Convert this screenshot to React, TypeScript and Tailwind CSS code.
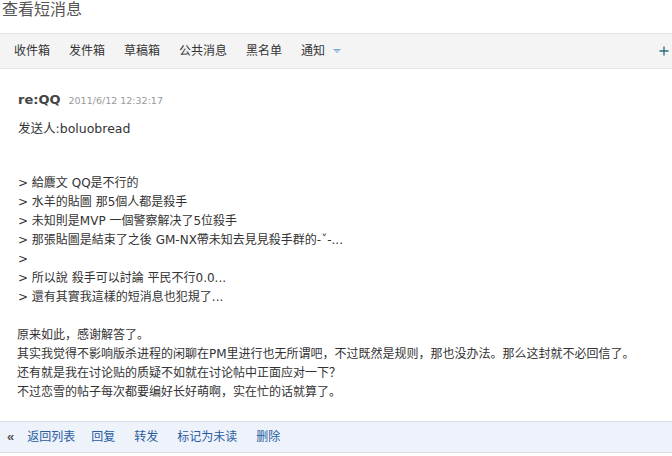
import React from "react";

const cjk = '"Liberation Sans", "Noto Sans CJK SC", sans-serif';
const body = '"DejaVu Sans", "Noto Sans CJK SC", sans-serif';

export default function App() {
  const quotes = [
    "> 給麎文 QQ是不行的",
    "> 水羊的貼圖 那5個人都是殺手",
    "> 未知則是MVP 一個警察解决了5位殺手",
    "> 那張貼圖是結束了之後 GM-NX帶未知去見見殺手群的-ˇ-...",
    ">",
    "> 所以說 殺手可以討論 平民不行0.0...",
    "> 還有其實我這樣的短消息也犯規了...",
  ];
  const para = [
    "原来如此，感谢解答了。",
    "其实我觉得不影响版杀进程的闲聊在PM里进行也无所谓吧，不过既然是规则，那也没办法。那么这封就不必回信了。",
    "还有就是我在讨论贴的质疑不如就在讨论帖中正面应对一下？",
    "不过恋雪的帖子每次都要编好长好萌啊，实在忙的话就算了。",
  ];
  return (
    <div className="w-[672px] h-[456px] bg-white overflow-hidden text-[#333]" style={{ fontFamily: cjk }}>
      <div className="h-[33px] pl-[2px] text-[16px] leading-[20px] text-[#555]">查看短消息</div>
      <div className="h-[36px] bg-[#f4f4f4] border-y border-[#e4e4e4] flex items-center pl-[14px] pr-[3px] text-[12px] text-[#333]">
        <div className="flex items-center gap-[19px]">
          <span>收件箱</span>
          <span>发件箱</span>
          <span>草稿箱</span>
          <span>公共消息</span>
          <span>黑名单</span>
          <span className="flex items-center">
            通知
            <svg width="8" height="5" viewBox="0 0 8 5" className="ml-[8px]">
              <path d="M0.5 0.5 L7.5 0.5 L4 4.5 Z" fill="#a9c8e8" />
              <path d="M0.5 0.5 L7.5 0.5" stroke="#7aa7d4" strokeWidth="1" />
            </svg>
          </span>
        </div>
        <div className="ml-auto">
          <svg width="10" height="10" viewBox="0 0 10 10">
            <path d="M5 0.5 V9.5 M0.5 5 H9.5" stroke="#2d6a7a" strokeWidth="1.3" />
          </svg>
        </div>
      </div>
      <div className="pl-[18px] pt-[21px]">
        <div className="flex items-baseline h-[20px]">
          <span className="text-[13px] font-bold text-[#444]" style={{ fontFamily: '"DejaVu Sans", sans-serif' }}>re:QQ</span>
          <span className="ml-[8px] text-[9.5px] text-[#999]" style={{ fontFamily: '"DejaVu Sans", sans-serif' }}>2011/6/12 12:32:17</span>
        </div>
        <div className="mt-[9px] text-[12.5px] leading-[19px]" style={{ fontFamily: body }}>发送人:boluobread</div>
        <div className="mt-[36px] text-[12px] leading-[19px]" style={{ fontFamily: body }}>
          {quotes.map((q, i) => (
            <div key={i} className="h-[19px]">{q}</div>
          ))}
          <div className="h-[19px]" />
          {para.map((q, i) => (
            <div key={i} className="h-[19px] -ml-[1px]">{q}</div>
          ))}
        </div>
      </div>
      <div className="mt-[19px] h-[32px] bg-[#eef2fb] border-y border-[#d9dde5] flex items-center pl-[7px] text-[12px] text-[#2a5d9f]">
        <span className="text-[#555] text-[13px] mr-[13px] font-bold">«</span>
        <div className="flex items-center gap-[19px]">
          <span className="-mr-[3px]">返回列表</span>
          <span>回复</span>
          <span>转发</span>
          <span>标记为未读</span>
          <span>删除</span>
        </div>
      </div>
    </div>
  );
}
